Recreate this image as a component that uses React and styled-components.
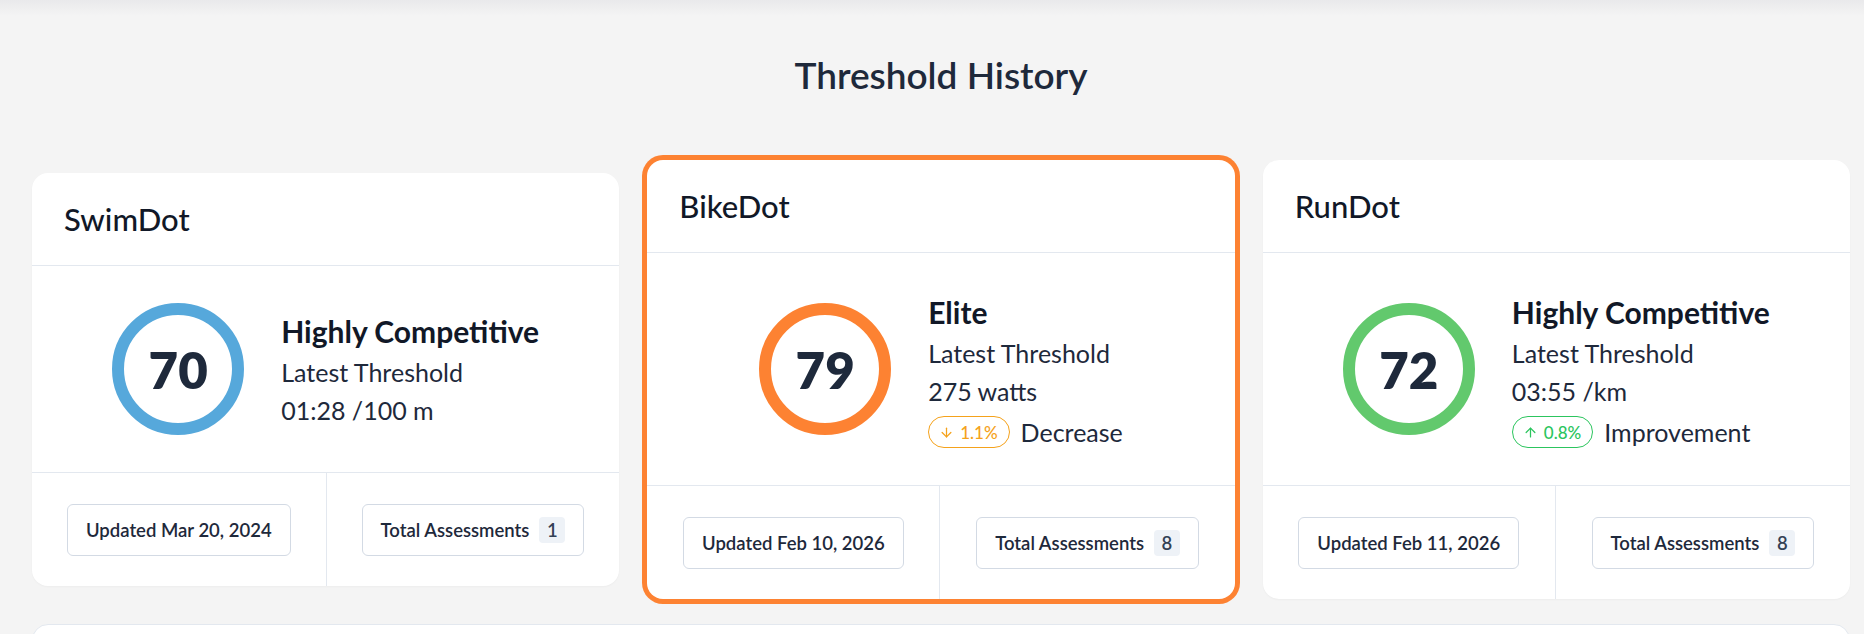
import React from "react"
import styled, { createGlobalStyle } from "styled-components"
import { ArrowDown, ArrowUp } from "lucide-react"

const GlobalStyle = createGlobalStyle`
  body {
    margin: 0;
    background: #f4f4f4;
    font-family: Lato, "Noto Sans", sans-serif;
    color: #1e293b;
  }
`

const Page = styled.div`
  min-height: 634px;
  box-sizing: border-box;
  padding: 53px 14px 0 32px;
  background: linear-gradient(#e9e9eb 0, #f4f4f4 16px);
`

const Title = styled.h2`
  margin: 0;
  text-align: center;
  font-size: 37px;
  line-height: 43px;
  font-weight: 600;
  color: #1e293b;
`

const CardsRow = styled.div`
  display: grid;
  grid-template-columns: repeat(3, 1fr);
  gap: 28px;
  align-items: center;
  margin-top: 64px;
`

const Card = styled.div`
  background: #fff;
  border-radius: 16px;
  overflow: hidden;
  box-shadow: ${(p) => (p.$active ? "0 0 0 5px #fd8232" : "0 1px 2px rgba(15, 23, 42, 0.03)")};
`

const CardHeader = styled.div`
  height: 93px;
  box-sizing: border-box;
  display: flex;
  align-items: center;
  padding: 0 32px;
  border-bottom: 1px solid #e3e8ef;
  font-size: 31px;
  font-weight: 500;
  color: #111827;
`

const CardBody = styled.div`
  display: flex;
  align-items: center;
  justify-content: center;
  gap: 37px;
  padding: 37px 20px;
  border-bottom: 1px solid #e3e8ef;
`

const Ring = styled.div`
  width: 132px;
  height: 132px;
  box-sizing: border-box;
  flex: none;
  border-radius: 50%;
  border: 12px solid ${(p) => p.$color};
  display: flex;
  align-items: center;
  justify-content: center;
  font-size: 51px;
  font-weight: 800;
  color: #1e293b;
`

const Info = styled.div`
  display: flex;
  flex-direction: column;
`

const Level = styled.div`
  font-size: 30px;
  line-height: 44px;
  font-weight: 700;
  color: #111827;
`

const Line = styled.div`
  font-size: 25px;
  line-height: 38px;
  color: #1e293b;
`

const ChangeRow = styled.div`
  display: flex;
  align-items: center;
  gap: 11px;
  margin-top: 6px;
  font-size: 25px;
  color: #1e293b;
`

const ChangeBadge = styled.span`
  display: inline-flex;
  align-items: center;
  gap: 6px;
  height: 32px;
  box-sizing: border-box;
  padding: 0 11px 0 10px;
  border-radius: 999px;
  border: 1px solid ${(p) => p.$color};
  color: ${(p) => p.$color};
  font-size: 17px;
  font-weight: 500;
`

const CardFooter = styled.div`
  display: flex;
  height: 113px;
`

const FooterCell = styled.div`
  flex: 1 1 auto;
  display: flex;
  align-items: center;
  justify-content: center;
  padding: 0 32px;
  & + & {
    border-left: 1px solid #e3e8ef;
  }
`

const InfoBox = styled.div`
  display: flex;
  align-items: center;
  gap: 10px;
  height: 52px;
  box-sizing: border-box;
  padding: 0 18px;
  border: 1.5px solid #d3dae4;
  border-radius: 6px;
  font-size: 18.5px;
  font-weight: 600;
  color: #1e293b;
  white-space: nowrap;
`

const Count = styled.span`
  min-width: 26px;
  height: 26px;
  display: inline-flex;
  align-items: center;
  justify-content: center;
  border-radius: 4px;
  background: #eef2f7;
  color: #334155;
`

const BottomPanel = styled.div`
  margin-top: 25px;
  height: 80px;
  background: #fff;
  border: 1px solid #e3e8ef;
  border-radius: 16px;
`

const dots = [
  {
    name: "SwimDot",
    score: 70,
    color: "#56a8db",
    level: "Highly Competitive",
    value: "01:28 /100 m",
    updated: "Mar 20, 2024",
    total: 1,
  },
  {
    name: "BikeDot",
    score: 79,
    color: "#fd8232",
    level: "Elite",
    value: "275 watts",
    change: { dir: "down", pct: "1.1%", label: "Decrease" },
    updated: "Feb 10, 2026",
    total: 8,
    active: true,
  },
  {
    name: "RunDot",
    score: 72,
    color: "#62c96d",
    level: "Highly Competitive",
    value: "03:55 /km",
    change: { dir: "up", pct: "0.8%", label: "Improvement" },
    updated: "Feb 11, 2026",
    total: 8,
  },
]

function DotCard({ dot }) {
  const ch = dot.change
  const chColor = ch && ch.dir === "down" ? "#f5a21b" : "#2cc55e"
  return (
    <Card $active={dot.active}>
      <CardHeader>{dot.name}</CardHeader>
      <CardBody>
        <Ring $color={dot.color}>{dot.score}</Ring>
        <Info>
          <Level>{dot.level}</Level>
          <Line>Latest Threshold</Line>
          <Line>{dot.value}</Line>
          {ch && (
            <ChangeRow>
              <ChangeBadge $color={chColor}>
                {ch.dir === "down" ? (
                  <ArrowDown size={15} strokeWidth={2} />
                ) : (
                  <ArrowUp size={15} strokeWidth={2} />
                )}
                {ch.pct}
              </ChangeBadge>
              {ch.label}
            </ChangeRow>
          )}
        </Info>
      </CardBody>
      <CardFooter>
        <FooterCell>
          <InfoBox>Updated {dot.updated}</InfoBox>
        </FooterCell>
        <FooterCell>
          <InfoBox>
            Total Assessments <Count>{dot.total}</Count>
          </InfoBox>
        </FooterCell>
      </CardFooter>
    </Card>
  )
}

export default function App() {
  return (
    <>
      <GlobalStyle />
      <Page>
        <Title>Threshold History</Title>
        <CardsRow>
          {dots.map((d) => (
            <DotCard key={d.name} dot={d} />
          ))}
        </CardsRow>
        <BottomPanel />
      </Page>
    </>
  )
}
